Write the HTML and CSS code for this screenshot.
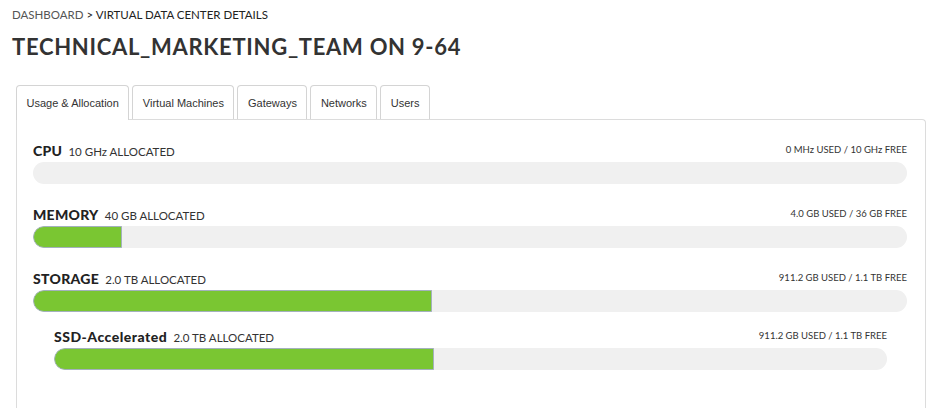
FILE: index.html
```html
<!DOCTYPE html>
<html lang="en">
<head>
    <meta charset="UTF-8">
    <title>Virtual Data Center Details</title>
    <link rel="stylesheet" href="styles.css">
</head>
<body>
    <div class="breadcrumb"><span class="crumb-link">DASHBOARD</span> &gt; VIRTUAL DATA CENTER DETAILS</div>
    <h1>TECHNICAL_MARKETING_TEAM ON 9-64</h1>

    <div class="tabs">
        <div class="tab active">Usage &amp; Allocation</div>
        <div class="tab">Virtual Machines</div>
        <div class="tab">Gateways</div>
        <div class="tab">Networks</div>
        <div class="tab">Users</div>
    </div>

    <div class="panel">
        <div class="resource">
            <div class="resource-head">
                <div><span class="name">CPU</span> <span class="alloc">10 GHz ALLOCATED</span></div>
                <div class="usage">0 MHz USED / 10 GHz FREE</div>
            </div>
            <div class="bar"></div>
        </div>

        <div class="resource">
            <div class="resource-head">
                <div><span class="name">MEMORY</span> <span class="alloc">40 GB ALLOCATED</span></div>
                <div class="usage">4.0 GB USED / 36 GB FREE</div>
            </div>
            <div class="bar"><div class="fill" style="width: 10.2%;"></div></div>
        </div>

        <div class="resource">
            <div class="resource-head">
                <div><span class="name">STORAGE</span> <span class="alloc">2.0 TB ALLOCATED</span></div>
                <div class="usage">911.2 GB USED / 1.1 TB FREE</div>
            </div>
            <div class="bar"><div class="fill" style="width: 45.6%;"></div></div>
        </div>

        <div class="resource sub">
            <div class="resource-head">
                <div><span class="name">SSD-Accelerated</span> <span class="alloc">2.0 TB ALLOCATED</span></div>
                <div class="usage">911.2 GB USED / 1.1 TB FREE</div>
            </div>
            <div class="bar"><div class="fill" style="width: 45.6%;"></div></div>
        </div>
    </div>
</body>
</html>
```

FILE: styles.css
```css
body {
    margin: 0;
    padding: 7px 12px 0;
    font-family: Lato, "Liberation Sans", sans-serif;
    color: #333;
    background-color: #fff;
}
.breadcrumb {
    font-size: 11.5px;
    line-height: 16px;
    color: #222;
}
.crumb-link {
    color: #555;
}
h1 {
    margin: 11px 0 0;
    font-size: 22px;
    line-height: 26px;
    font-weight: 700;
    letter-spacing: 0.7px;
    color: #333;
}

/* Tabs */
.tabs {
    display: flex;
    gap: 3px;
    margin: 25px 0 0 4px;
}
.tab {
    height: 33px;
    line-height: 34px;
    padding: 0 9.5px;
    font-family: "Liberation Sans", Arial, sans-serif;
    font-size: 11px;
    color: #333;
    background-color: #fff;
    border: 1px solid #d4d4d4;
    border-bottom: none;
    border-radius: 4px 4px 0 0;
}
.tab.active {
    position: relative;
    height: 34px;
    margin-bottom: -1px;
}

/* Panel */
.panel {
    margin-left: 4px;
    width: 874px;
    height: 270px;
    padding: 19px 18px 0 16px;
    border: 1px solid #dcdcdc;
    border-bottom: none;
    border-radius: 0 4px 0 0;
}
.resource {
    margin-bottom: 19px;
}
.resource.sub {
    margin: -6px 20px 0 21px;
}
.resource-head {
    display: flex;
    justify-content: space-between;
    align-items: center;
    height: 20px;
    margin-bottom: 3px;
}
.name {
    font-size: 14px;
    font-weight: 900;
    letter-spacing: 0.3px;
    color: #222;
}
.sub .name {
    letter-spacing: 0.5px;
}
.alloc {
    font-size: 11.5px;
    margin-left: 2px;
    color: #333;
}
.usage {
    font-size: 9.5px;
    color: #333;
}
.bar {
    height: 22px;
    background-color: #f0f0f0;
    border-radius: 11px;
    overflow: hidden;
}
.fill {
    height: 100%;
    box-sizing: border-box;
    background-color: #7ac632;
    border: 1px solid #a3b1bd;
    border-radius: 11px 0 0 11px;
}
```
